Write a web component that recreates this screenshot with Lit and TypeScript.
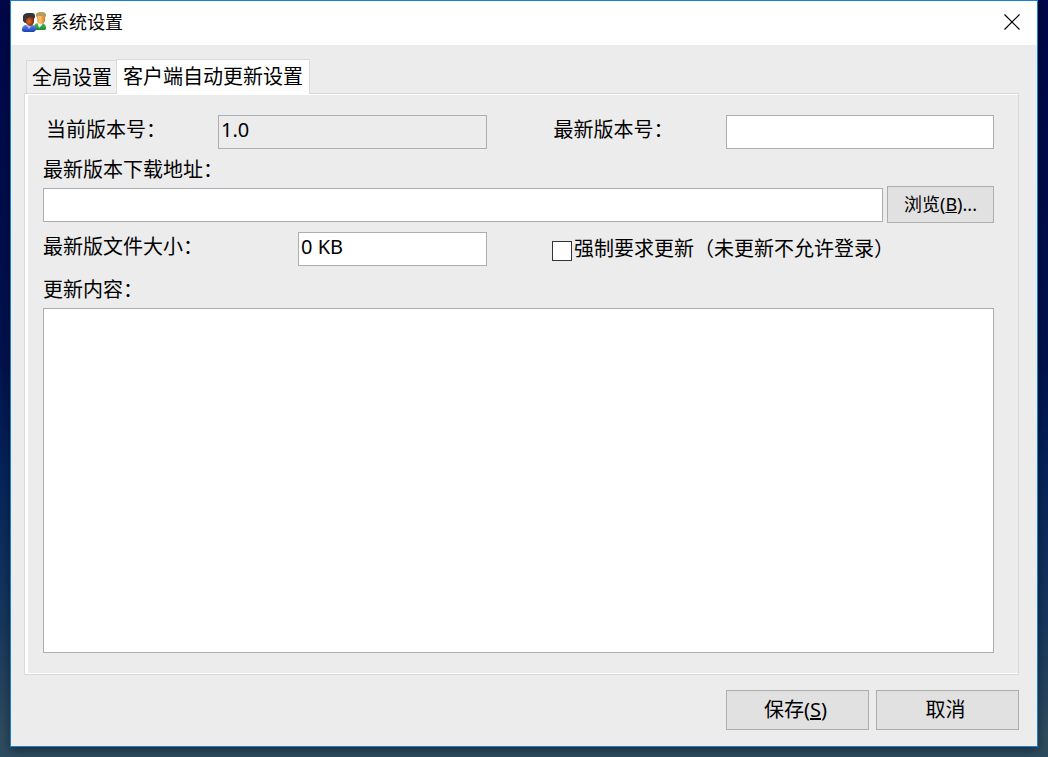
import { LitElement, html, css, svg } from "lit";
import { customElement, state } from "lit/decorators.js";

const usersIcon = svg`
  <svg class="icon" viewBox="0 0 24 22" aria-hidden="true">
    <defs>
      <radialGradient id="dark" cx=".45" cy=".55" r=".6"><stop offset="0" stop-color="#e0702c"/><stop offset=".6" stop-color="#a03c14"/><stop offset="1" stop-color="#5c2410"/></radialGradient>
      <linearGradient id="fair" x1="0" x2="1"><stop offset="0" stop-color="#f0a850"/><stop offset=".4" stop-color="#fcc070"/><stop offset="1" stop-color="#d87c18"/></linearGradient>
      <linearGradient id="blue" y1="0" y2="1" x2="0"><stop offset="0" stop-color="#5b86ee"/><stop offset="1" stop-color="#1c40b4"/></linearGradient>
      <linearGradient id="green" y1="0" y2="1" x2="0"><stop offset="0" stop-color="#4cb860"/><stop offset="1" stop-color="#1e8a34"/></linearGradient>
    </defs>
    <path d="M12 19v-4q1-3 4-3h4q4 1 4 5v1l-1 1z" fill="url(#green)"/>
    <path d="M15 11h6l-1 3-3 3-1-3z" fill="#e4f4dc"/>
    <path d="M15 4h8v6q-1 3-4 3t-4-3z" fill="url(#fair)"/>
    <path d="M14 6V3q1-2 4-2h2q3 0 4 2v3l-2-1h-6z" fill="#b49c60"/>
    <path d="M0 20v-2q1-4 4-4h6q3 0 4 4v1l-2 2H2z" fill="url(#blue)"/>
    <path d="M4 14h6l-3 4z" fill="#a8c0f8"/>
    <path d="M3 5h9v6q-1 4-4 4-4-1-5-5z" fill="url(#dark)"/>
    <path d="M1 10V5q1-3 5-3h4q3 0 3 3v3l-1-2H7L4 8v4q-2 0-3-2z" fill="#34363e"/>
  </svg>`;

@customElement("app-root")
export class AppRoot extends LitElement {
  @state() private currentVersion = "1.0";
  @state() private fileSize = "0 KB";

  static styles = css`
    :host {
      display: block;
      box-sizing: border-box;
      height: 100vh;
      padding: 0 10px 10px;
      background: linear-gradient(#00074a 0%, #00124f 48%, #05245c 62%, #17375f 82%, #2e4c60 97%);
      font: 20px/30px "Noto Sans", "Noto Sans CJK SC", sans-serif;
      color: #000;
    }
    * {
      box-sizing: border-box;
    }
    .window {
      display: flex;
      flex-direction: column;
      height: 100%;
      border: 1px solid #1a80d4;
      background: #ececec;
      box-shadow: 0 3px 10px rgba(0, 0, 0, 0.45);
    }
    .titlebar {
      display: flex;
      align-items: center;
      gap: 5px;
      height: 44px;
      padding: 0 16px 2px 11px;
      background: #fff;
    }
    .title {
      flex: 1;
      margin: 0;
      font-size: 18px;
      font-weight: 400;
    }
    .icon {
      width: 24px;
      height: 22px;
    }
    .close {
      display: flex;
      padding: 0;
      border: 0;
      background: none;
    }
    .cross {
      width: 18px;
      height: 18px;
    }
    .body {
      display: flex;
      flex-direction: column;
      flex: 1;
      min-height: 0;
      padding: 14px 18px 16px 13px;
    }
    .tabs {
      display: flex;
      align-items: flex-end;
      padding-left: 2px;
    }
    .tab {
      height: 33px;
      padding: 2px 4px 0 5px;
      border: 1px solid #d9d9d9;
      border-width: 1px 0 0 1px;
      background: #f0f0f0;
      font: inherit;
      color: inherit;
      white-space: nowrap;
    }
    .tab.active {
      position: relative;
      height: 35px;
      margin-bottom: -1px;
      padding: 0 6px;
      border-width: 1px 1px 0;
      background: #fff;
    }
    .panel {
      display: flex;
      flex-direction: column;
      flex: 1;
      min-height: 0;
      padding: 21px 24px 21px 18px;
      border: 1px solid #d9d9d9;
      box-shadow: inset 3px 1px #fff, inset 0 -1px #fff;
    }
    .row {
      display: flex;
    }
    .versions {
      display: grid;
      grid-template-columns: 175px minmax(0, 1fr) 67px 172px minmax(0, 1fr);
    }
    .latest {
      grid-column: 4;
    }
    .versions .label:first-child {
      padding-left: 3px;
    }
    .label {
      white-space: nowrap;
    }
    .field {
      width: 100%;
      min-width: 0;
      height: 34px;
      margin: 0;
      padding: 0 2px 6px;
      border: 1px solid #abadb3;
      border-radius: 0;
      background: #fff;
      font: inherit;
      color: inherit;
      outline: none;
    }
    .field:read-only {
      background: #ececec;
    }
    .url-label {
      margin: 6px 0 1px;
    }
    .url {
      gap: 4px;
      align-items: center;
    }
    .button {
      height: 40px;
      width: 143px;
      padding: 0 4px 0 0;
      border: 1px solid #adadad;
      background: #e1e1e1;
      font: inherit;
      color: inherit;
    }
    .browse {
      flex: none;
      width: 107px;
      height: 37px;
      padding: 0 0 2px;
      font-size: 18px;
    }
    .details {
      display: grid;
      grid-template-columns: 255px minmax(0, 1fr) 65px minmax(0, 442px);
      margin-top: 9px;
    }
    .force {
      display: flex;
      grid-column: 4;
      align-items: center;
      gap: 2px;
      white-space: nowrap;
    }
    .check {
      appearance: none;
      flex: none;
      width: 20px;
      height: 20px;
      margin: 4px 0 0;
      border: 1px solid #333;
      background: #fff;
    }
    .check:checked {
      box-shadow: inset 0 0 0 4px #fff;
      background: #333;
    }
    .notes-label {
      margin: 9px 0 3px;
    }
    .notes {
      flex: 1;
      resize: none;
    }
    .footer {
      display: flex;
      justify-content: flex-end;
      gap: 7px;
      margin-top: 15px;
    }
  `;

  render() {
    return html`
      <main class="window">
        <header class="titlebar">
          ${usersIcon}
          <h1 class="title">系统设置</h1>
          <button class="close" type="button" aria-label="关闭">
            <svg class="cross" viewBox="0 0 18 18"><path d="M1.5 1.5l15 15M16.5 1.5l-15 15" stroke="#000" stroke-width="1.2" fill="none"/></svg>
          </button>
        </header>
        <form class="body" @submit=${(e: Event) => e.preventDefault()}>
          <div class="tabs" role="tablist">
            <button class="tab" type="button" role="tab" aria-selected="false">全局设置</button>
            <button class="tab active" type="button" role="tab" aria-selected="true">客户端自动更新设置</button>
          </div>
          <section class="panel" role="tabpanel">
            <div class="versions">
              <label class="label" for="current">当前版本号：</label>
              <input class="field" id="current" readonly .value=${this.currentVersion} />
              <label class="label latest" for="latest">最新版本号：</label>
              <input class="field" id="latest" />
            </div>
            <label class="label url-label" for="url">最新版本下载地址：</label>
            <div class="row url">
              <input class="field" id="url" />
              <button class="button browse" type="button">浏览(<u>B</u>)...</button>
            </div>
            <div class="details">
              <label class="label" for="size">最新版文件大小：</label>
              <input class="field" id="size" .value=${this.fileSize} />
              <label class="force"><input class="check" type="checkbox" />强制要求更新（未更新不允许登录）</label>
            </div>
            <label class="label notes-label" for="notes">更新内容：</label>
            <textarea class="field notes" id="notes"></textarea>
          </section>
          <footer class="footer">
            <button class="button" type="submit">保存(<u>S</u>)</button>
            <button class="button" type="button">取消</button>
          </footer>
        </form>
      </main>
    `;
  }
}
